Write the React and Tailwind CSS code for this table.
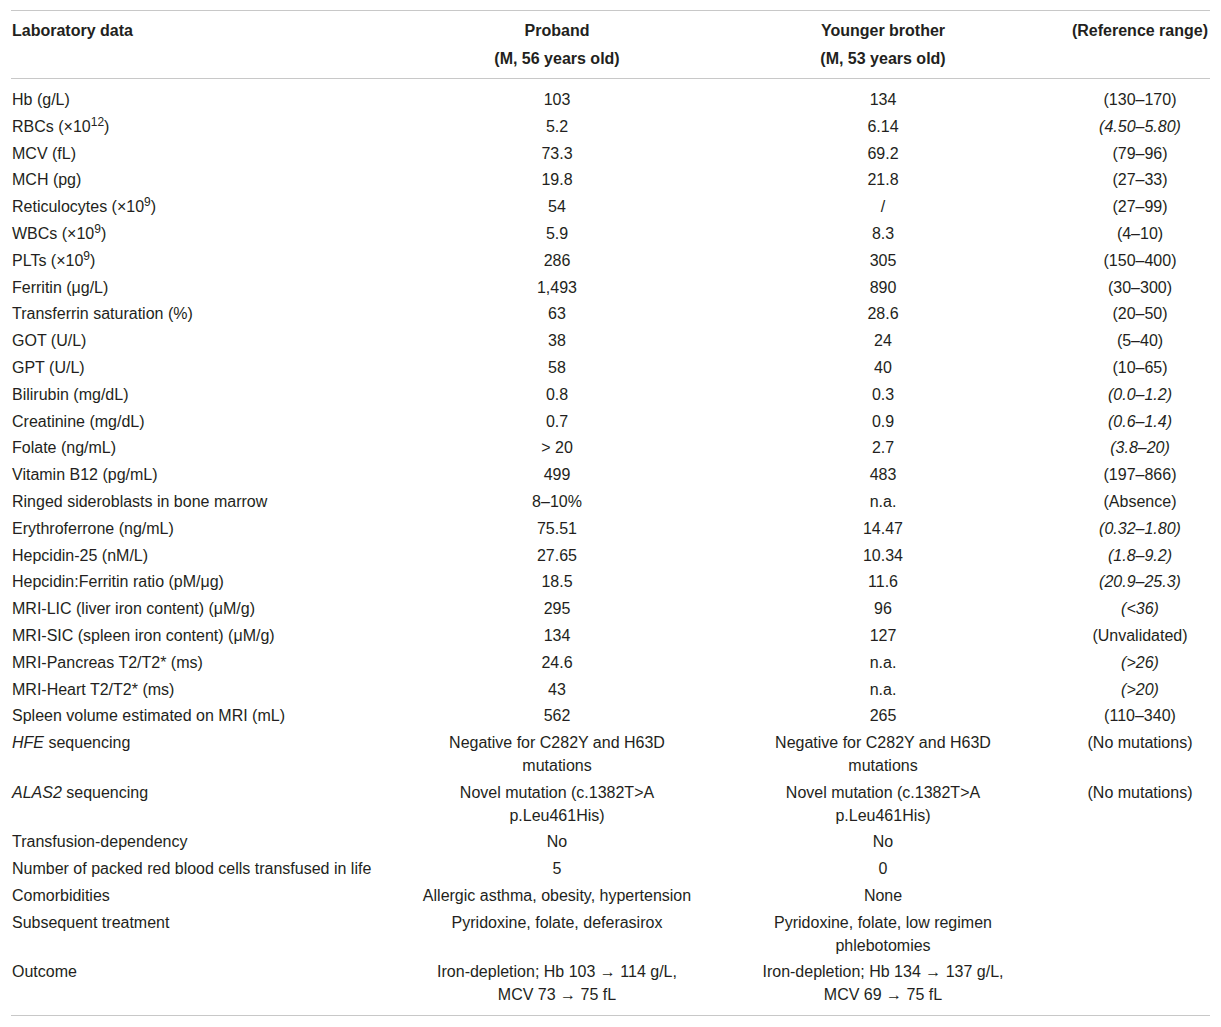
import React from "react";

const rows = [
  ["Hb (g/L)", "103", "134", "(130–170)"],
  [<>RBCs (×10<sup>12</sup>)</>, "5.2", "6.14", "(4.50–5.80)", true],
  ["MCV (fL)", "73.3", "69.2", "(79–96)"],
  ["MCH (pg)", "19.8", "21.8", "(27–33)"],
  [<>Reticulocytes (×10<sup>9</sup>)</>, "54", "/", "(27–99)"],
  [<>WBCs (×10<sup>9</sup>)</>, "5.9", "8.3", "(4–10)"],
  [<>PLTs (×10<sup>9</sup>)</>, "286", "305", "(150–400)"],
  ["Ferritin (μg/L)", "1,493", "890", "(30–300)"],
  ["Transferrin saturation (%)", "63", "28.6", "(20–50)"],
  ["GOT (U/L)", "38", "24", "(5–40)"],
  ["GPT (U/L)", "58", "40", "(10–65)"],
  ["Bilirubin (mg/dL)", "0.8", "0.3", "(0.0–1.2)", true],
  ["Creatinine (mg/dL)", "0.7", "0.9", "(0.6–1.4)", true],
  ["Folate (ng/mL)", "> 20", "2.7", "(3.8–20)", true],
  ["Vitamin B12 (pg/mL)", "499", "483", "(197–866)"],
  ["Ringed sideroblasts in bone marrow", "8–10%", "n.a.", "(Absence)"],
  ["Erythroferrone (ng/mL)", "75.51", "14.47", "(0.32–1.80)", true],
  ["Hepcidin-25 (nM/L)", "27.65", "10.34", "(1.8–9.2)", true],
  ["Hepcidin:Ferritin ratio (pM/μg)", "18.5", "11.6", "(20.9–25.3)", true],
  ["MRI-LIC (liver iron content) (μM/g)", "295", "96", "(<36)", true],
  ["MRI-SIC (spleen iron content) (μM/g)", "134", "127", "(Unvalidated)"],
  ["MRI-Pancreas T2/T2* (ms)", "24.6", "n.a.", "(>26)", true],
  ["MRI-Heart T2/T2* (ms)", "43", "n.a.", "(>20)", true],
  ["Spleen volume estimated on MRI (mL)", "562", "265", "(110–340)"],
  [<><i>HFE</i> sequencing</>, "Negative for C282Y and H63D mutations", "Negative for C282Y and H63D mutations", "(No mutations)"],
  [<><i>ALAS2</i> sequencing</>, "Novel mutation (c.1382T>A p.Leu461His)", "Novel mutation (c.1382T>A p.Leu461His)", "(No mutations)"],
  ["Transfusion-dependency", "No", "No", ""],
  ["Number of packed red blood cells transfused in life", "5", "0", ""],
  ["Comorbidities", "Allergic asthma, obesity, hypertension", "None", ""],
  ["Subsequent treatment", "Pyridoxine, folate, deferasirox", "Pyridoxine, folate, low regimen phlebotomies", ""],
  [
    "Outcome",
    <>Iron-depletion; Hb 103 → 114 g/L,<br />MCV 73 → 75 fL</>,
    <>Iron-depletion; Hb 134 → 137 g/L,<br />MCV 69 → 75 fL</>,
    "",
  ],
];

export default function App() {
  return (
    <div className="bg-white min-h-screen pt-[10px] pl-[11px] text-[#231f20] text-[16px]" style={{ fontFamily: '"Liberation Sans", Arial, sans-serif' }}>
      <table className="table-fixed w-[1199px] border-collapse border-t border-b border-[#c8c8c8]">
        <colgroup>
          <col className="w-[394px]" />
          <col className="w-[304px]" />
          <col className="w-[348px]" />
          <col className="w-[153px]" />
        </colgroup>
        <thead>
          <tr className="border-b border-[#c8c8c8] font-bold leading-[28px] align-top">
            <th className="text-left pl-[1px] pt-[5.5px] pb-[5px]">Laboratory data</th>
            <th className="text-center px-[10px] pt-[5.5px] pb-[5px]">Proband<br />(M, 56 years old)</th>
            <th className="text-center px-[32px] pt-[5.5px] pb-[5px]">Younger brother<br />(M, 53 years old)</th>
            <th className="text-center pl-[13px] pt-[5.5px] pb-[5px] whitespace-nowrap">(Reference range)</th>
          </tr>
        </thead>
        <tbody>
          <tr><td colSpan={4} className="h-[9px] p-0"></td></tr>
          {rows.map(([label, a, b, ref, italic], i) => (
            <tr key={i} className="align-top leading-[22.8px]">
              <td className="pl-[1px] py-[2px] whitespace-nowrap">{label}</td>
              <td className="px-[10px] py-[2px] text-center">{a}</td>
              <td className="px-[32px] py-[2px] text-center">{b}</td>
              <td className={"pl-[13px] py-[2px] text-center whitespace-nowrap" + (italic ? " italic" : "")}>{ref}</td>
            </tr>
          ))}
          <tr><td colSpan={4} className="h-[7px] p-0"></td></tr>
        </tbody>
      </table>
    </div>
  );
}
